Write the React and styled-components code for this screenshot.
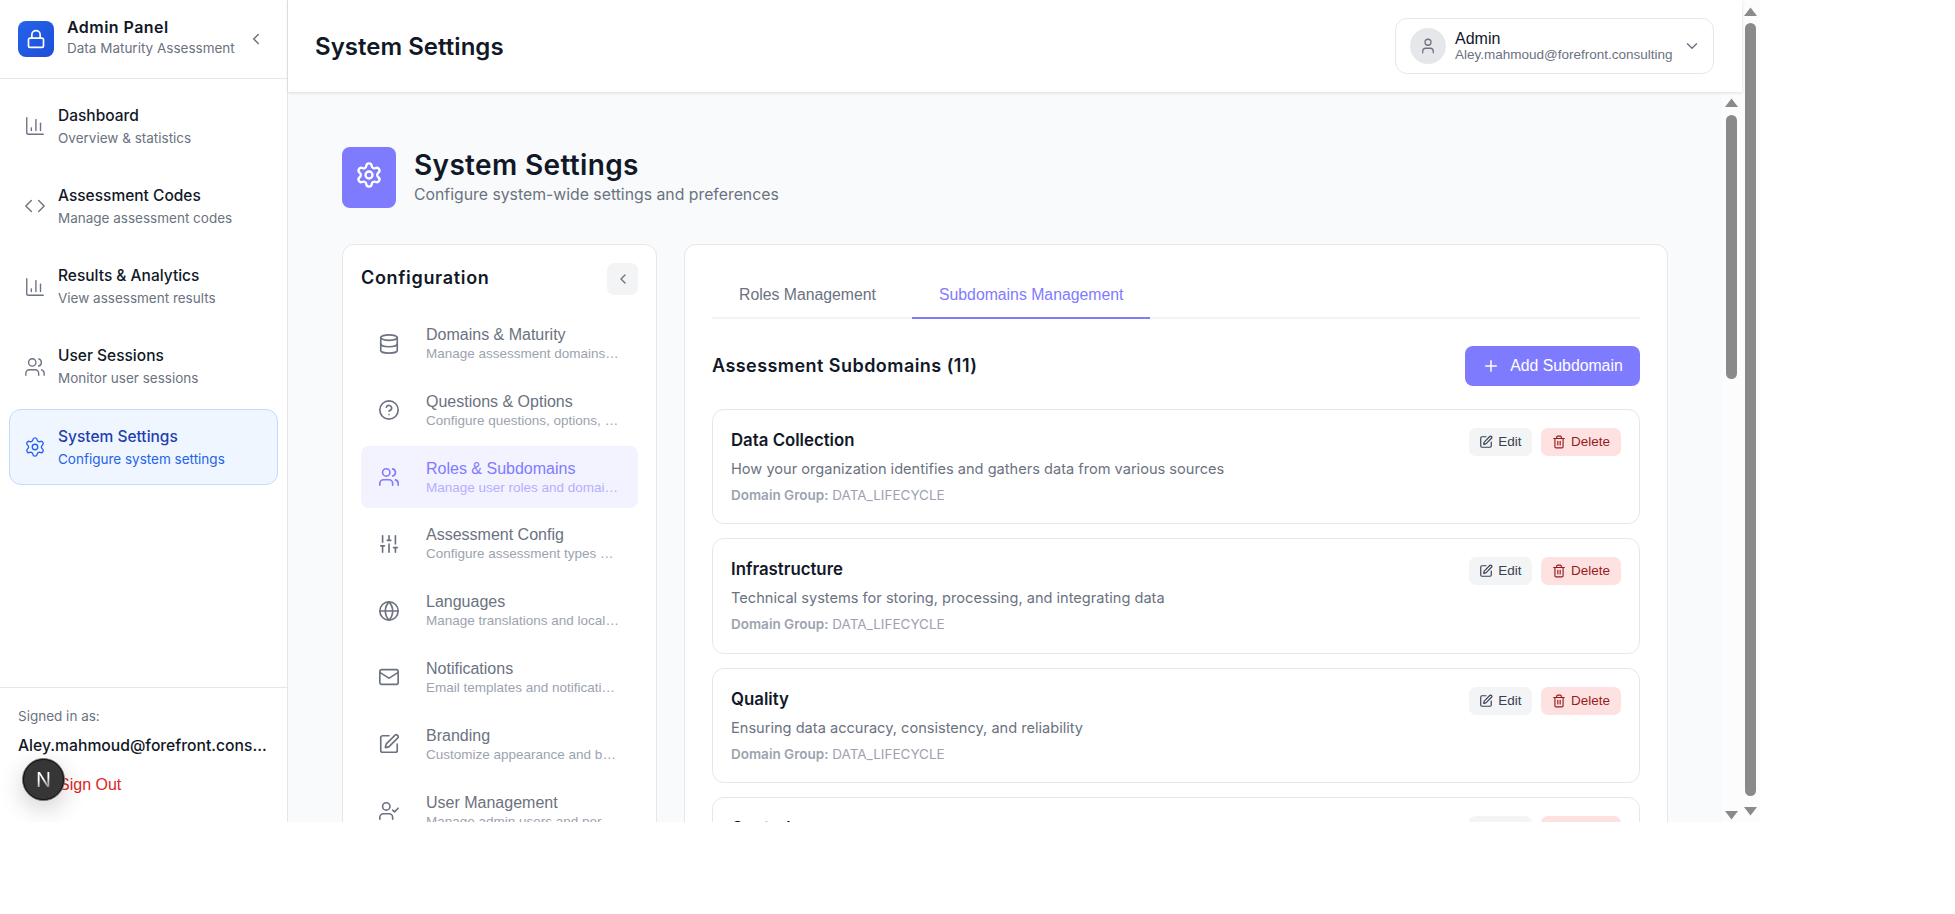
import React from 'react';
import styled, { createGlobalStyle } from 'styled-components';
import {
  Lock, ChevronLeft, ChevronDown, ChartColumn, Code, Users, Settings, Database, CircleHelp,
  SlidersVertical, Globe, Mail, SquarePen, UserCheck, User, Plus, Trash2,
} from 'lucide-react';

const Global = createGlobalStyle`
  html, body { margin: 0; padding: 0; background: #fff; overflow: hidden; }
  * { box-sizing: border-box; }
  body { font-family: "Liberation Sans", Arial, sans-serif; }
`;
const inter = `Inter, "Liberation Sans", sans-serif`;
const display = `Inter, "Liberation Sans", sans-serif`;
const purple = '#7f7bff';

const Shell = styled.div`
  position: relative; width: 1760px; height: 822px; display: flex; overflow: hidden; background: #fff;
`;
const Sidebar = styled.aside`
  width: 288px; flex: none; display: flex; flex-direction: column; border-right: 1px solid #e5e7eb; background: #fff;
`;
const Brand = styled.div`
  height: 79px; flex: none; display: flex; align-items: center; padding: 0 18px; border-bottom: 1px solid #e5e7eb;
`;
const BrandLogo = styled.div`
  width: 36px; height: 36px; border-radius: 8px; background: linear-gradient(135deg, #2563eb, #1d4ed8);
  color: #fff; display: flex; align-items: center; justify-content: center; margin-right: 13px;
`;
const BrandText = styled.div`flex: 1; min-width: 0; margin-bottom: 4px;`;
const BrandTitle = styled.div`
  font: 600 16px/20px ${display}; color: #111827; letter-spacing: 0.45px;
`;
const BrandSub = styled.div`font: 400 13.5px/20px ${inter}; color: #6b7280; margin-top: 1px;`;
const BrandToggle = styled.div`color: #6b7280; display: flex; margin-right: 4px;`;
const Nav = styled.nav`flex: 1; display: flex; flex-direction: column; gap: 4.25px; padding: 9px 9px 0;`;
const NavItem = styled.div`
  height: 76px; flex: none; display: flex; align-items: center; gap: 12px; padding: 0 14px; border-radius: 12px;
  border: 1px solid ${p => (p.$active ? '#bfdbfe' : 'transparent')};
  background: ${p => (p.$active ? '#eff6ff' : 'transparent')};
  color: ${p => (p.$active ? '#2563eb' : '#6b7280')};
`;
const NavTitle = styled.div`
  font: 500 15.5px/20px ${inter}; color: ${p => (p.$active ? '#1e40af' : '#111827')};
`;
const NavSub = styled.div`
  font: 400 13.5px/18px ${inter}; margin-top: 3px; color: ${p => (p.$active ? '#2563eb' : '#6b7280')};
`;
const SideFoot = styled.div`
  height: 135px; flex: none; border-top: 1px solid #e5e7eb; padding: 18px 18px 0;
`;
const SignedLabel = styled.div`font: 400 13.5px/20px ${inter}; color: #6b7280;`;
const SignedMail = styled.div`
  font: 500 15.7px/20px ${inter}; color: #111827; margin-top: 10px; white-space: nowrap; overflow: hidden;
  text-overflow: ellipsis; width: 251px;
`;
const SignOut = styled.div`font: 400 16px/20px "Liberation Sans", sans-serif; color: #dc2626; margin: 19px 0 0 41px;`;
const NextBadge = styled.div`
  position: absolute; left: 22px; top: 758px; width: 43px; height: 43px; border-radius: 50%;
  background: #363636; border: 1px solid #777; outline: 1px solid #111; outline-offset: -2px;
  box-shadow: 0 8px 24px rgba(0,0,0,.18);
  display: flex; align-items: center; justify-content: center; font: 400 20px/1 ${inter};
`;
const NextLetter = styled.span`
  background: linear-gradient(160deg, #fff 45%, #777 90%); -webkit-background-clip: text; background-clip: text; color: transparent;
`;
const MainCol = styled.div`flex: 1; min-width: 0; display: flex; flex-direction: column;`;
const TopBar = styled.header`
  position: relative; z-index: 2; height: 92px; flex: none; display: flex; align-items: center; justify-content: space-between;
  padding: 0 28px 0 27px; background: #fff; box-shadow: 0 1px 3px rgba(0,0,0,.12);
`;
const TopTitle = styled.h1`
  margin: 1px 0 0; font: 600 24px/30px ${display}; color: #111827; letter-spacing: 0.03px;
`;
const UserBox = styled.div`
  width: 319px; height: 56px; border: 1px solid #e5e7eb; border-radius: 12px; display: flex; align-items: center;
  padding: 0 12px 0 14px; gap: 9px; background: #fff;
`;
const Avatar = styled.div`
  width: 36px; height: 36px; flex: none; border-radius: 50%; background: #e5e7eb; color: #6b7280; display: flex; align-items: center; justify-content: center;
`;
const UserInfo = styled.div`flex: 1;`;
const UserName = styled.div`font: 400 16px/17px "Liberation Sans", sans-serif; color: #111827;`;
const UserMail = styled.div`font: 400 13.5px/16px "Liberation Sans", sans-serif; color: #6b7280;`;
const ChevronSlot = styled.div`color: #6b7280; display: flex;`;
const Below = styled.div`flex: 1; min-height: 0; display: flex;`;
const Content = styled.main`
  flex: 1; min-width: 0; overflow: hidden; background: #f9fafb; padding: 55px 54px 0 54px;
`;
const PageHead = styled.div`display: flex; align-items: center; gap: 18px; height: 61px;`;
const PageIcon = styled.div`
  width: 54px; height: 61px; border-radius: 8px; background: ${purple}; color: #fff; display: flex; align-items: center; justify-content: center; padding-bottom: 5px;
`;
const PageText = styled.div`margin-bottom: 3px;`;
const PageTitle = styled.h2`margin: 0; font: 600 28px/34px ${display}; color: #111827; letter-spacing: 0.35px;`;
const PageSub = styled.div`font: 400 15.8px/20px ${inter}; color: #6b7280; margin-top: 3px;`;
const Columns = styled.div`display: flex; gap: 27px; margin-top: 36px; align-items: flex-start;`;
const ConfigCard = styled.section`
  width: 315px; flex: none; height: 700px; background: #fff; border: 1px solid #e5e7eb; border-radius: 12px; padding: 18px 18px 0;
`;
const ConfigHead = styled.div`display: flex; justify-content: space-between; align-items: center; height: 32px; margin-bottom: 17.5px;`;
const ConfigTitle = styled.h3`margin: 0 0 2px; font: 600 18px/24px ${display}; color: #111827; letter-spacing: 0.68px;`;
const CollapseBtn = styled.div`
  width: 31px; height: 32px; border-radius: 7px; background: #f3f4f6; color: #6b7280; display: flex; align-items: center; justify-content: center;
`;
const ConfigList = styled.div`display: flex; flex-direction: column; gap: 4.8px;`;
const ConfigItem = styled.div`
  height: 62px; flex: none; border-radius: 8px; display: flex; align-items: center; gap: 26px; padding: 0 0 0 17px;
  background: ${p => (p.$active ? '#f3f2ff' : 'transparent')};
  color: ${p => (p.$active ? purple : '#6b7280')};
`;
const ConfigText = styled.div`width: 193px; min-width: 0;`;
const ConfigName = styled.div`font: 400 16px/20px "Liberation Sans", sans-serif; color: ${p => (p.$active ? purple : '#6b7280')};`;
const ConfigSub = styled.div`
  font: 400 13.5px/17px "Liberation Sans", sans-serif; color: ${p => (p.$active ? '#b3b0ff' : '#9ca3af')};
  white-space: nowrap; overflow: hidden; text-overflow: ellipsis;
`;
const PanelCard = styled.section`
  flex: 1; min-width: 0; height: 700px; background: #fff; border: 1px solid #e5e7eb; border-radius: 12px; padding: 27px 27px 0;
`;
const Tabs = styled.div`display: flex; gap: 9px; height: 47px; border-bottom: 2px solid #f3f4f6;`;
const Tab = styled.div`
  height: 47px; padding: 0 27px 0; display: flex; align-items: center; font: 400 15.8px/20px "Liberation Sans", sans-serif; margin-bottom: -2px;
  color: ${p => (p.$active ? purple : '#6b7280')};
  border-bottom: 2px solid ${p => (p.$active ? purple : 'transparent')};
`;
const SectionHead = styled.div`display: flex; align-items: center; justify-content: space-between; margin-top: 27px; height: 40px;`;
const SectionTitle = styled.h3`margin: 0 0 1px; font: 600 18px/24px ${display}; color: #111827; letter-spacing: 0.45px;`;
const AddBtn = styled.div`
  width: 175px; height: 40px; border-radius: 8px; background: ${purple}; color: #fff; display: flex; align-items: center; justify-content: center; gap: 10px;
  font: 400 15.8px/20px "Liberation Sans", sans-serif;
`;
const CardList = styled.div`display: flex; flex-direction: column; gap: 14px; margin-top: 23px;`;
const SubCard = styled.article`
  height: 115.4px; flex: none; border: 1px solid #e5e7eb; border-radius: 12px; padding: 18px; display: flex; justify-content: space-between; align-items: flex-start; background: #fff;
`;
const SubTitle = styled.div`font: 600 16.8px/22px ${inter}; color: #111827; margin-top: 1px;`;
const SubDesc = styled.div`font: 400 14.6px/20px ${inter}; color: #6b7280; margin-top: 8px;`;
const SubMeta = styled.div`font: 400 13.5px/18px ${inter}; color: #9ca3af; margin-top: 7px;`;
const MetaLabel = styled.strong`font-weight: 600;`;
const Actions = styled.div`display: flex; gap: 9px;`;
const SmallBtn = styled.div`
  height: 28px; display: flex; align-items: center; gap: 5px; padding: 0 ${p => (p.$danger ? '11px' : '10.5px')}; border-radius: 7px;
  font: 400 13.5px/18px "Liberation Sans", sans-serif;
  background: ${p => (p.$danger ? '#fee2e2' : '#f3f4f6')};
  color: ${p => (p.$danger ? '#991b1b' : '#374151')};
`;
const Track = styled.div`
  width: ${p => p.$w}px; flex: none; display: flex; flex-direction: column; align-items: center; background: #fcfcfc;
  padding: ${p => p.$pad};
`;
const Thumb = styled.div`width: 11px; flex: ${p => (p.$len ? `0 0 ${p.$len}px` : 1)}; background: #8a8a8a; border-radius: 6px; margin: ${p => p.$m};`;
const Arrow = styled.svg`width: 13px; height: 9px; flex: none; fill: #8a8a8a;`;
const Spacer = styled.div`flex: 1;`;

const ArrowUp = () => <Arrow viewBox="0 0 13 9"><path d="M6.5 0.5 13 9H0z" /></Arrow>;
const ArrowDown = () => <Arrow viewBox="0 0 13 9"><path d="M0 0h13L6.5 8.5z" /></Arrow>;

const navItems = [
  [ChartColumn, 'Dashboard', 'Overview & statistics'],
  [Code, 'Assessment Codes', 'Manage assessment codes'],
  [ChartColumn, 'Results & Analytics', 'View assessment results'],
  [Users, 'User Sessions', 'Monitor user sessions'],
  [Settings, 'System Settings', 'Configure system settings', true],
];
const configItems = [
  [Database, 'Domains & Maturity', 'Manage assessment domains and maturity levels'],
  [CircleHelp, 'Questions & Options', 'Configure questions, options, and scoring'],
  [Users, 'Roles & Subdomains', 'Manage user roles and domain groups', true],
  [SlidersVertical, 'Assessment Config', 'Configure assessment types and rules'],
  [Globe, 'Languages', 'Manage translations and localization'],
  [Mail, 'Notifications', 'Email templates and notification rules'],
  [SquarePen, 'Branding', 'Customize appearance and branding'],
  [UserCheck, 'User Management', 'Manage admin users and permissions'],
];
const subdomains = [
  ['Data Collection', 'How your organization identifies and gathers data from various sources'],
  ['Infrastructure', 'Technical systems for storing, processing, and integrating data'],
  ['Quality', 'Ensuring data accuracy, consistency, and reliability'],
  ['Control', 'Managing access, policies, and accountability for data'],
];

export default function App() {
  return (
    <Shell>
      <Global />
      <Sidebar>
        <Brand>
          <BrandLogo><Lock size={20} strokeWidth={2} /></BrandLogo>
          <BrandText>
            <BrandTitle>Admin Panel</BrandTitle>
            <BrandSub>Data Maturity Assessment</BrandSub>
          </BrandText>
          <BrandToggle><ChevronLeft size={18} strokeWidth={2} /></BrandToggle>
        </Brand>
        <Nav>
          {navItems.map(([Icon, t, s, a]) => (
            <NavItem key={t} $active={a}>
              <Icon size={22} strokeWidth={1.5} />
              <div>
                <NavTitle $active={a}>{t}</NavTitle>
                <NavSub $active={a}>{s}</NavSub>
              </div>
            </NavItem>
          ))}
        </Nav>
        <SideFoot>
          <SignedLabel>Signed in as:</SignedLabel>
          <SignedMail>Aley.mahmoud@forefront.consulting</SignedMail>
          <SignOut>Sign Out</SignOut>
        </SideFoot>
      </Sidebar>
      <MainCol>
        <TopBar>
          <TopTitle>System Settings</TopTitle>
          <UserBox>
            <Avatar><User size={18} strokeWidth={1.7} /></Avatar>
            <UserInfo>
              <UserName>Admin</UserName>
              <UserMail>Aley.mahmoud@forefront.consulting</UserMail>
            </UserInfo>
            <ChevronSlot><ChevronDown size={18} strokeWidth={1.8} /></ChevronSlot>
          </UserBox>
        </TopBar>
        <Below>
          <Content>
            <PageHead>
              <PageIcon><Settings size={28} strokeWidth={2} /></PageIcon>
              <PageText>
                <PageTitle>System Settings</PageTitle>
                <PageSub>Configure system-wide settings and preferences</PageSub>
              </PageText>
            </PageHead>
            <Columns>
              <ConfigCard>
                <ConfigHead>
                  <ConfigTitle>Configuration</ConfigTitle>
                  <CollapseBtn><ChevronLeft size={16} /></CollapseBtn>
                </ConfigHead>
                <ConfigList>
                  {configItems.map(([Icon, t, s, a]) => (
                    <ConfigItem key={t} $active={a}>
                      <Icon size={22} strokeWidth={1.8} />
                      <ConfigText>
                        <ConfigName $active={a}>{t}</ConfigName>
                        <ConfigSub $active={a}>{s}</ConfigSub>
                      </ConfigText>
                    </ConfigItem>
                  ))}
                </ConfigList>
              </ConfigCard>
              <PanelCard>
                <Tabs>
                  <Tab>Roles Management</Tab>
                  <Tab $active>Subdomains Management</Tab>
                </Tabs>
                <SectionHead>
                  <SectionTitle>Assessment Subdomains (11)</SectionTitle>
                  <AddBtn><Plus size={18} />Add Subdomain</AddBtn>
                </SectionHead>
                <CardList>
                  {subdomains.map(([t, d]) => (
                    <SubCard key={t}>
                      <div>
                        <SubTitle>{t}</SubTitle>
                        <SubDesc>{d}</SubDesc>
                        <SubMeta><MetaLabel>Domain Group:</MetaLabel> DATA_LIFECYCLE</SubMeta>
                      </div>
                      <Actions>
                        <SmallBtn><SquarePen size={14} />Edit</SmallBtn>
                        <SmallBtn $danger><Trash2 size={14} />Delete</SmallBtn>
                      </Actions>
                    </SubCard>
                  ))}
                </CardList>
              </PanelCard>
            </Columns>
          </Content>
          <Track $w={20} $pad="6px 1px 2px 0">
            <ArrowUp />
            <Thumb $m="8px 0 0" $len={264} />
            <Spacer />
            <ArrowDown />
          </Track>
        </Below>
      </MainCol>
      <Track $w={18} $pad="7px 1px 6px 0">
        <ArrowUp />
        <Thumb $m="7px 0 11px" />
        <ArrowDown />
      </Track>
      <NextBadge><NextLetter>N</NextLetter></NextBadge>
    </Shell>
  );
}
